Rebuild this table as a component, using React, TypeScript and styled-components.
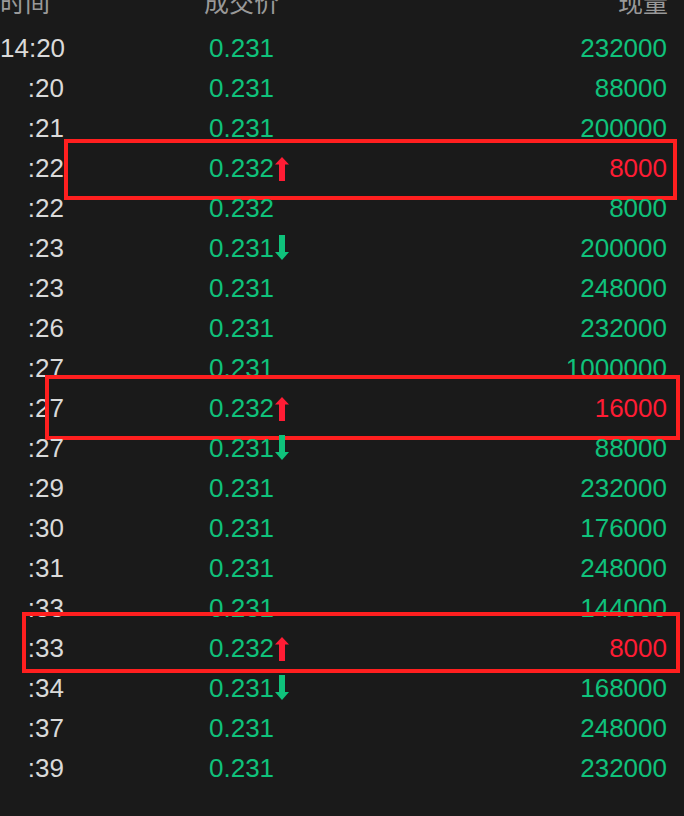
import styled, { createGlobalStyle } from 'styled-components'

const GlobalStyle = createGlobalStyle`
  html, body {
    margin: 0;
    padding: 0;
    background: #1a1a1a;
  }
  body {
    font-family: 'Liberation Sans', Arial, 'Noto Sans CJK SC', sans-serif;
    overflow: hidden;
  }
`

const GREEN = '#0fc27b'
const RED = '#ff1c34'

interface Box {
  left: number
  top: number
  width: number
  height: number
}

interface Tick {
  time: string
  price: string
  volume: string
  dir?: 'up' | 'down'
  box?: Box
}

const ticks: Array<Tick> = [
  { time: '14:20', price: '0.231', volume: '232000' },
  { time: ':20', price: '0.231', volume: '88000' },
  { time: ':21', price: '0.231', volume: '200000' },
  { time: ':22', price: '0.232', volume: '8000', dir: 'up', box: { left: 64, top: -9, width: 613, height: 61 } },
  { time: ':22', price: '0.232', volume: '8000' },
  { time: ':23', price: '0.231', volume: '200000', dir: 'down' },
  { time: ':23', price: '0.231', volume: '248000' },
  { time: ':26', price: '0.231', volume: '232000' },
  { time: ':27', price: '0.231', volume: '1000000' },
  { time: ':27', price: '0.232', volume: '16000', dir: 'up', box: { left: 45, top: -13, width: 635, height: 65 } },
  { time: ':27', price: '0.231', volume: '88000', dir: 'down' },
  { time: ':29', price: '0.231', volume: '232000' },
  { time: ':30', price: '0.231', volume: '176000' },
  { time: ':31', price: '0.231', volume: '248000' },
  { time: ':33', price: '0.231', volume: '144000' },
  { time: ':33', price: '0.232', volume: '8000', dir: 'up', box: { left: 22, top: -16, width: 658, height: 61 } },
  { time: ':34', price: '0.231', volume: '168000', dir: 'down' },
  { time: ':37', price: '0.231', volume: '248000' },
  { time: ':39', price: '0.231', volume: '232000' },
]

const StyledList = styled.div`
  width: 684px;
  padding-right: 17px;
  box-sizing: border-box;
`

const StyledHeader = styled.div`
  display: grid;
  grid-template-columns: 204px 1fr auto;
  height: 40px;
  margin-top: -12px;
  line-height: 26px;
  font-family: 'Noto Sans CJK SC', 'Liberation Sans', sans-serif;
  font-size: 25px;
  color: #999999;
  span:last-child {
    margin-right: -1px;
  }
`

const StyledRow = styled.div`
  position: relative;
  display: grid;
  grid-template-columns: 64px 145px 1fr auto;
  height: 40px;
  line-height: 40px;
  font-size: 26px;
`

const TimeCell = styled.span`
  grid-column: 1;
  text-align: right;
  color: #dadada;
`

const PriceCell = styled.span`
  grid-column: 3;
  display: inline-flex;
  align-items: center;
  color: ${GREEN};
`

const VolumeCell = styled.span<{ $hot: boolean }>`
  grid-column: 4;
  text-align: right;
  color: ${(p) => (p.$hot ? RED : GREEN)};
`

const StyledArrow = styled.svg<{ $dir: 'up' | 'down' }>`
  margin-left: 1px;
  margin-top: ${(p) => (p.$dir === 'up' ? '2px' : '-1px')};
  flex: none;
`

const Annotation = styled.div<{ $box: Box }>`
  position: absolute;
  left: ${(p) => p.$box.left}px;
  top: ${(p) => p.$box.top}px;
  width: ${(p) => p.$box.width}px;
  height: ${(p) => p.$box.height}px;
  border: 4px solid #ff1f1f;
  box-sizing: border-box;
  pointer-events: none;
`

const Arrow = ({ dir }: { dir: 'up' | 'down' }) =>
  dir === 'up' ? (
    <StyledArrow $dir={dir} width='14' height='24' viewBox='0 0 14 24'>
      <path d='M7 0 L14 7.5 L10 7.5 L10 24 L4 24 L4 7.5 L0 7.5 Z' fill={RED} />
    </StyledArrow>
  ) : (
    <StyledArrow $dir={dir} width='14' height='25' viewBox='0 0 14 25'>
      <path d='M4 0 L10 0 L10 17 L14 17 L7 25 L0 17 L4 17 Z' fill={GREEN} />
    </StyledArrow>
  )

function App() {
  return (
    <>
      <GlobalStyle />
      <StyledList>
        <StyledHeader>
          <span>时间</span>
          <span>成交价</span>
          <span>现量</span>
        </StyledHeader>
        {ticks.map((t, i) => (
          <StyledRow key={i}>
            <TimeCell>{t.time}</TimeCell>
            <PriceCell>
              {t.price}
              {t.dir ? <Arrow dir={t.dir} /> : null}
            </PriceCell>
            <VolumeCell $hot={t.dir === 'up'}>{t.volume}</VolumeCell>
            {t.box ? <Annotation $box={t.box} /> : null}
          </StyledRow>
        ))}
      </StyledList>
    </>
  )
}

export default App
